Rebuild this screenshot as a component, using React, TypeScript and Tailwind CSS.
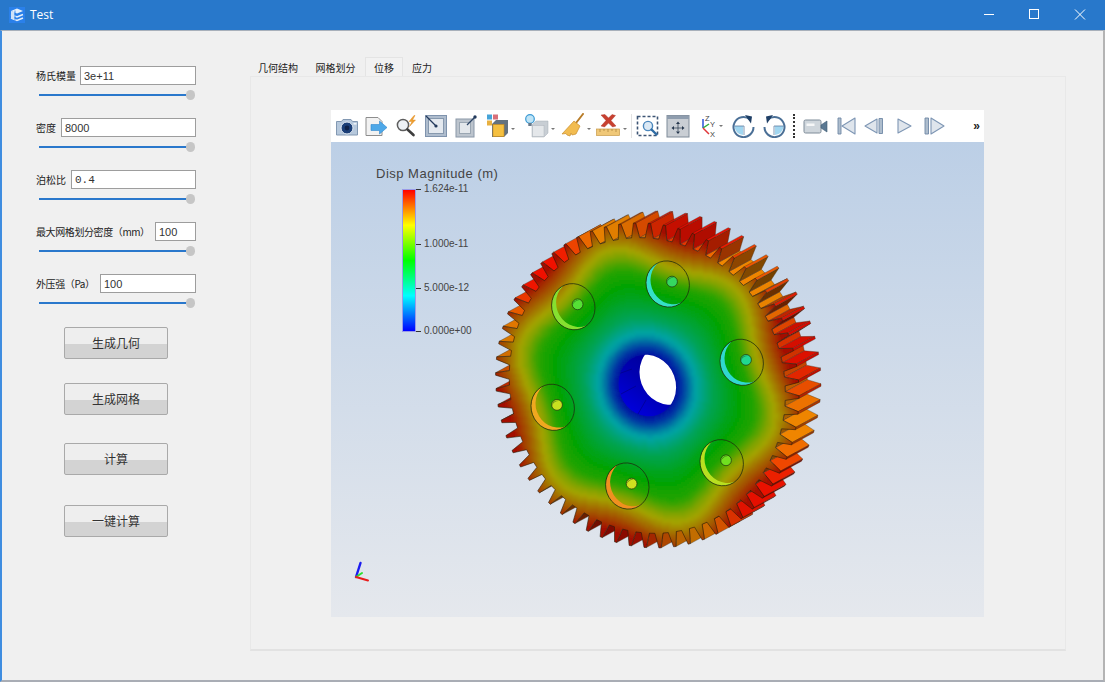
import { ReactNode, useMemo } from "react";

const CJK = "font-['Noto_Sans_CJK_SC','Noto_Sans',sans-serif]";

// gear geometry, in viewport pixels
const CX = 316.3;
const CY = 243.5;
const A = 164;
const B = 150;
const TH = (70 * Math.PI) / 180;
const DX = 22;
const DY = -12;
const TEETH = 64;

const toPage = (u: number, v: number): [number, number] => [
  CX + Math.cos(TH) * A * u - Math.sin(TH) * B * v,
  CY + Math.sin(TH) * A * u + Math.cos(TH) * B * v,
];
const toLocal = (x: number, y: number): [number, number] => {
  const dx = x - CX;
  const dy = y - CY;
  return [
    (Math.cos(TH) * dx + Math.sin(TH) * dy) / A,
    (-Math.sin(TH) * dx + Math.cos(TH) * dy) / B,
  ];
};

const bosses = [
  { x: 242.3, y: 164.7, wall: "#86e030", hole: "#55e035" },
  { x: 336.7, y: 142, wall: "#35e0c8", hole: "#35d860" },
  { x: 410.7, y: 220.3, wall: "#30d8d0", hole: "#20d890" },
  { x: 390.7, y: 320.7, wall: "#b8e020", hole: "#70e020" },
  { x: 296.3, y: 344, wall: "#f09020", hole: "#d0e020" },
  { x: 221.7, y: 265.3, wall: "#f0a820", hole: "#c8e020" },
];
const PHI0 = (() => {
  const [u, v] = toLocal(bosses[0].x, bosses[0].y);
  return Math.atan2(v, u);
})();

const stops: [number, number][] = [
  [0.17, 0],
  [0.23, 0.08],
  [0.3, 0.22],
  [0.42, 0.37],
  [0.55, 0.47],
  [0.68, 0.56],
  [0.76, 0.7],
  [0.87, 0.83],
  [1.0, 0.98],
  [1.1, 1],
];

const field = (u: number, v: number) => {
  const r = Math.hypot(u, v);
  const lobe = Math.min(1, Math.max(0, (r - 0.35) / 0.4));
  const rr = r * (1 + 0.065 * lobe * Math.cos(6 * (Math.atan2(v, u) - PHI0)));
  if (rr <= stops[0][0]) return 0;
  for (let i = 1; i < stops.length; i++) {
    if (rr <= stops[i][0]) {
      const t = (rr - stops[i - 1][0]) / (stops[i][0] - stops[i - 1][0]);
      return stops[i - 1][1] + t * (stops[i][1] - stops[i - 1][1]);
    }
  }
  return 1;
};

const rainbow = (val: number, shade: number) => {
  const s = Math.min(1, Math.max(0, val)) * 4;
  let c = [0, 0, 255];
  if (s < 1) c = [0, s * 255, 255];
  else if (s < 2) c = [0, 255, (2 - s) * 255];
  else if (s < 3) c = [(s - 2) * 255, 255, 0];
  else c = [255, (4 - s) * 255, 0];
  return `rgb(${Math.round(c[0] * shade)},${Math.round(c[1] * shade)},${Math.round(c[2] * shade)})`;
};

const gearOutline = () => {
  const pts: [number, number][] = [];
  const root = 0.91;
  for (let i = 0; i < TEETH; i++) {
    const p = (Math.PI * 2) / TEETH;
    const a = i * p;
    pts.push(toPage(root * Math.cos(a - p * 0.3), root * Math.sin(a - p * 0.3)));
    pts.push(toPage(Math.cos(a - p * 0.08), Math.sin(a - p * 0.08)));
    pts.push(toPage(Math.cos(a + p * 0.08), Math.sin(a + p * 0.08)));
    pts.push(toPage(root * Math.cos(a + p * 0.3), root * Math.sin(a + p * 0.3)));
  }
  return pts;
};

const Gear = () => {
  const { outline, walls, bins } = useMemo(() => {
    const pts = gearOutline();
    const outline = "M" + pts.map((p) => `${p[0].toFixed(1)} ${p[1].toFixed(1)}`).join("L") + "Z";
    const walls = pts
      .map((p, i) => {
        const q = pts[(i + 1) % pts.length];
        const ex = q[0] - p[0];
        const ey = q[1] - p[1];
        const len = Math.hypot(ex, ey) || 1;
        // outward normal, outline runs clockwise on screen
        const nx = ey / len;
        const ny = -ex / len;
        const mx = (p[0] + q[0]) / 2;
        const my = (p[1] + q[1]) / 2;
        const [u, v] = toLocal(mx, my);
        const shade = 0.42 + 0.52 * Math.max(0, nx * 0.6 + ny * -0.8);
        return {
          vis: nx * DX + ny * DY > 0,
          order: mx * DX + my * DY,
          fill: rainbow(Math.max(0.86, field(u, v)), shade),
          d: `M${p[0].toFixed(1)} ${p[1].toFixed(1)}L${q[0].toFixed(1)} ${q[1].toFixed(1)}L${(q[0] + DX).toFixed(1)} ${(q[1] + DY).toFixed(1)}L${(p[0] + DX).toFixed(1)} ${(p[1] + DY).toFixed(1)}Z`,
        };
      })
      .filter((w) => w.vis)
      .sort((a, b) => a.order - b.order);
    const bins: string[] = new Array(65).fill("");
    for (let x = 150; x < 490; x += 2) {
      for (let y = 60; y < 420; y += 2) {
        const [u, v] = toLocal(x + 1, y + 1);
        if (Math.hypot(u, v) > 1.06) continue;
        bins[Math.round(field(u, v) * 64)] += `M${x} ${y}h2.2v2.2h-2.2z`;
      }
    }
    return { outline, walls, bins };
  }, []);

  return (
    <g>
      <defs>
        <clipPath id="gearFace">
          <path d={outline} />
        </clipPath>
        <filter id="soft" x="-5%" y="-5%" width="110%" height="110%">
          <feGaussianBlur stdDeviation="1.6" />
        </filter>
        <clipPath id="holeFront">
          <ellipse cx={CX} cy={CY} rx={31} ry={28.5} transform={`rotate(70 ${CX} ${CY})`} />
        </clipPath>
        <linearGradient id="holeWall" x1="0" y1="0" x2="0.7" y2="1">
          <stop offset="0" stopColor="#00008c" />
          <stop offset="0.55" stopColor="#0000b0" />
          <stop offset="1" stopColor="#0000dc" />
        </linearGradient>
        {bosses.map((b, i) => (
          <mask id={`crescent${i}`} key={i} maskUnits="userSpaceOnUse" x="0" y="0" width="653" height="475">
            <ellipse cx={b.x} cy={b.y} rx={23.3} ry={21.5} fill="#fff" transform={`rotate(70 ${b.x} ${b.y})`} />
            <ellipse cx={b.x + 4.5} cy={b.y - 2.8} rx={23.3} ry={21.5} fill="#000" transform={`rotate(70 ${b.x + 4.5} ${b.y - 2.8})`} />
          </mask>
        ))}
      </defs>

      {walls.map((w, i) => (
        <path key={i} d={w.d} fill={w.fill} stroke="#3a2a10" strokeWidth={0.35} />
      ))}

      <g clipPath="url(#gearFace)">
        <g filter="url(#soft)">
          {bins.map((d, i) =>
            d ? <path key={i} d={d} fill={rainbow(i / 64, 0.64)} /> : null,
          )}
        </g>
      </g>
      <path d={outline} fill="none" stroke="#2a1c08" strokeWidth={0.6} />

      <ellipse cx={CX} cy={CY} rx={31} ry={28.5} fill="url(#holeWall)" transform={`rotate(70 ${CX} ${CY})`} />
      <g clipPath="url(#holeFront)">
        <ellipse cx={CX + 21} cy={CY - 11.5} rx={31} ry={28.5} fill="#fff" transform={`rotate(70 ${CX + 21} ${CY - 11.5})`} />
        <path d="M287 232l14 -5M290 252l15 -8M307 272l8 -14" stroke="#000070" strokeWidth={0.5} />
      </g>

      {bosses.map((b, i) => (
        <g key={i}>
          <g mask={`url(#crescent${i})`}>
            <ellipse cx={b.x} cy={b.y} rx={23.3} ry={21.5} fill={b.wall} transform={`rotate(70 ${b.x} ${b.y})`} />
          </g>
          <ellipse cx={b.x} cy={b.y} rx={23.3} ry={21.5} fill="none" stroke="#1e2a10" strokeWidth={0.7} transform={`rotate(70 ${b.x} ${b.y})`} />
          <circle cx={b.x + 4.3} cy={b.y - 2.4} r={5.4} fill={b.hole} stroke="#1e3010" strokeWidth={0.7} />
          <path d={`M${b.x - 0.7} ${b.y - 1.2}a5.4 5.4 0 0 1 7.6 -5a6.5 6.5 0 0 0 -7.6 5z`} fill="#1d5a12" opacity={0.7} />
        </g>
      ))}

      {/* orientation axes */}
      <g strokeLinecap="round">
        <path d="M25 435L29.5 421" stroke="#1c1cf0" strokeWidth={2.4} />
        <path d="M25 435L31 431" stroke="#2ce02c" strokeWidth={2} />
        <path d="M25 435L37 438.5" stroke="#e81c1c" strokeWidth={2} />
      </g>
    </g>
  );
};

const Frame = ({ children }: { children: ReactNode }) => (
  <svg width="24" height="24" viewBox="0 0 24 24" fill="none">
    {children}
  </svg>
);

const CameraIcon = () => (
  <Frame>
    <path d="M1.5 7.5h5l1.5 -2h8l1.5 2h5v13.5h-21z" fill="#b6c8dc" stroke="#8298b2" strokeLinejoin="round" />
    <circle cx="12" cy="14" r="6" fill="#1b3f78" stroke="#e2eaf3" />
    <circle cx="12" cy="14" r="2.4" fill="#0e2148" />
    <rect x="18.5" y="9" width="3" height="1.6" fill="#eef3f8" />
  </Frame>
);

const ExportIcon = () => (
  <Frame>
    <path d="M2 3.5h12l4 4v14h-16z" fill="#f2f2f2" stroke="#8d8d8d" />
    <path d="M7 10.5h8.5v-3.5l7.5 6.5l-7.5 6.5v-3.5h-8.5z" fill="#4ea8e8" stroke="#2d86cc" strokeWidth="0.6" />
  </Frame>
);

const ZoomBoltIcon = () => (
  <Frame>
    <circle cx="9" cy="11" r="5.6" fill="#eef2f6" stroke="#5d5d5d" strokeWidth="1.5" />
    <path d="M13.5 15.5l6 5.5" stroke="#3d3d3d" strokeWidth="2.6" strokeLinecap="round" />
    <path d="M20 1.5l-5 6h3l-2.5 5l6 -6.5h-3l2.5 -4.5z" fill="#f0a030" stroke="#d88418" strokeWidth="0.4" />
  </Frame>
);

const ResetIcon = () => (
  <Frame>
    <rect x="1.5" y="1.5" width="21" height="21" fill="#aebccd" stroke="#7f93ad" />
    <rect x="4.5" y="4.5" width="15" height="15" fill="#e4e9ef" stroke="#8799ae" />
    <path d="M2 2l10 10" stroke="#233a5c" strokeWidth="1.3" />
    <circle cx="12" cy="12" r="1.6" fill="#233a5c" />
  </Frame>
);

const ZoomDataIcon = () => (
  <Frame>
    <rect x="2" y="5" width="18" height="18" fill="#bcc4cd" stroke="#8a98a8" />
    <rect x="5.5" y="8.5" width="11" height="11" fill="#e3e7eb" stroke="#9aa6b2" />
    <path d="M13 11l8 -8" stroke="#2e4666" strokeWidth="1.2" />
    <circle cx="21" cy="3" r="1.7" fill="#233a5c" />
  </Frame>
);

const Caret = ({ x }: { x: number }) => <path d={`M${x} 15h4l-2 2z`} fill="#777" />;

const SolidColorIcon = () => (
  <svg width="36" height="26" viewBox="0 0 36 26" fill="none">
    <rect x="5" y="1.5" width="5" height="5" fill="#46a4d8" />
    <rect x="11" y="1.5" width="5" height="5" fill="#d8707a" />
    <rect x="5" y="7.5" width="5" height="5" fill="#e8b040" />
    <path d="M10 11l4 -4h12v13l-4 4h-12z" fill="#63727f" />
    <rect x="11" y="11.5" width="11" height="12" fill="#f5c040" stroke="#c98a18" strokeWidth="0.6" />
    <Caret x={29} />
  </svg>
);

const LightCubeIcon = () => (
  <svg width="36" height="26" viewBox="0 0 36 26" fill="none">
    <circle cx="9" cy="6" r="4.3" fill="#bfe4f6" stroke="#3b9ad4" strokeWidth="1.2" />
    <rect x="7.3" y="10" width="3.4" height="3" fill="#66788a" />
    <path d="M11 12l4 -4h12v12l-4 4h-12z" fill="#c8ced4" stroke="#a4adb6" strokeWidth="0.5" />
    <rect x="11.5" y="12.5" width="11.5" height="11" fill="#e4e7ea" stroke="#adb4bb" strokeWidth="0.5" />
    <Caret x={30} />
  </svg>
);

const BroomIcon = () => (
  <svg width="34" height="26" viewBox="0 0 34 26" fill="none">
    <path d="M24 1l-7 9" stroke="#b87c28" strokeWidth="2" strokeLinecap="round" />
    <path d="M15 8l6 5l-4 8l-4 1l-1 -2l-1 3l-3 -1l-1 -1.5l-4 0.5z" fill="#f2bc50" stroke="#c98e2c" strokeWidth="0.7" strokeLinejoin="round" />
    <Caret x={28} />
  </svg>
);

const RulerXIcon = () => (
  <svg width="34" height="26" viewBox="0 0 34 26" fill="none">
    <path d="M6 2l4 -0.5l3.5 3.5l3.5 -3.5l3.5 1l-4.5 5l5 5.5l-3.5 1l-4 -4l-4 4l-3.5 -1l5 -5.5z" fill="#c84030" stroke="#a83024" strokeWidth="0.4" />
    <rect x="1.5" y="16" width="23" height="6.5" fill="#f0c878" stroke="#c89a48" strokeWidth="0.7" />
    <path d="M5 16v3M9 16v2M13 16v3M17 16v2M21 16v3" stroke="#a87e38" strokeWidth="0.7" />
    <Caret x={28} />
  </svg>
);

const ZoomBoxIcon = () => (
  <Frame>
    <rect x="1.5" y="2.5" width="20" height="19" stroke="#3c5474" strokeWidth="1.6" strokeDasharray="3 2" />
    <circle cx="12" cy="12" r="4.6" fill="#dbe9f5" stroke="#4b87bd" strokeWidth="1.4" />
    <path d="M15.5 15.5l5 5" stroke="#2f6da6" strokeWidth="2.4" strokeLinecap="round" />
  </Frame>
);

const CenterIcon = () => (
  <Frame>
    <rect x="1" y="1.5" width="22" height="21.5" fill="#c9ced4" stroke="#7f8b99" />
    <rect x="1" y="1.5" width="22" height="3.5" fill="#8f9dae" />
    <path d="M12 7.5l-2 2.5h4zM12 20l-2 -2.5h4zM5.5 14l2.5 -2v4zM18.5 14l-2.5 -2v4z" fill="#25364c" />
    <path d="M12 10v7.5M8 14h8" stroke="#25364c" strokeWidth="0.7" />
  </Frame>
);

const AxesIcon = () => (
  <svg width="30" height="26" viewBox="0 0 30 26" fill="none">
    <path d="M7 15l0 -9" stroke="#2a50d8" strokeWidth="1.5" />
    <path d="M7 15l6 -4" stroke="#2fae3a" strokeWidth="1.5" />
    <path d="M7 15l6 6" stroke="#e0363a" strokeWidth="1.5" />
    <text x="9" y="8" fontSize="7.5" fontFamily="Liberation Sans" fill="#444">Z</text>
    <text x="14" y="14" fontSize="7.5" fontFamily="Liberation Sans" fill="#444">Y</text>
    <text x="14" y="24" fontSize="7.5" fontFamily="Liberation Sans" fill="#444">X</text>
    <path d="M23 12h4l-2 2z" fill="#777" />
  </svg>
);

const RotateIcon = ({ flip }: { flip?: boolean }) => (
  <svg width="24" height="24" viewBox="0 0 24 24" fill="none" className={flip ? "-scale-x-100" : ""}>
    <path d="M12 12h-1v9a9 9 0 0 1 -8.5 -9z" fill="#8accec" opacity="0.8" />
    <path d="M18 5.5a10 10 0 1 0 3.5 7.5" stroke="#4a6f96" strokeWidth="2" />
    <path d="M13 1l7 1.5l-1 7z" fill="#1f3f66" />
    <path d="M12 12v9M2.5 12h9.5" stroke="#4a6f96" strokeWidth="0.7" />
  </svg>
);

const RecordIcon = () => (
  <svg width="26" height="20" viewBox="0 0 26 20" fill="none">
    <rect x="1" y="4" width="17" height="13" rx="1.5" fill="#cfd6dc" stroke="#7f8c99" />
    <rect x="3.5" y="7.5" width="8" height="2.5" fill="#f6f7f8" />
    <path d="M18 9l6 -4v11l-6 -4z" fill="#5a7892" stroke="#3e5a74" strokeWidth="0.6" />
  </svg>
);

const VcrIcon = ({ d, bar }: { d: string; bar: string }) => (
  <svg width="22" height="20" viewBox="0 0 22 20" fill="none">
    <path d={d} fill="#dfe5ec" stroke="#7e96b4" strokeWidth="1.1" strokeLinejoin="round" />
    {bar ? <path d={bar} fill="#aebdcd" stroke="#6f88a6" strokeWidth="0.9" /> : null}
  </svg>
);

const Tool = ({ w, children }: { w: string; children: ReactNode }) => (
  <div className={`flex h-full items-center justify-center ${w}`}>{children}</div>
);

const Toolbar = () => (
  <div className="flex h-[32px] items-center bg-white pl-[2px]">
    <Tool w="w-[28px]"><CameraIcon /></Tool>
    <Tool w="w-[30px]"><ExportIcon /></Tool>
    <Tool w="w-[30px]"><ZoomBoltIcon /></Tool>
    <Tool w="w-[30px]"><ResetIcon /></Tool>
    <Tool w="w-[29px]"><ZoomDataIcon /></Tool>
    <Tool w="w-[40px]"><SolidColorIcon /></Tool>
    <Tool w="w-[38px]"><LightCubeIcon /></Tool>
    <Tool w="w-[36px]"><BroomIcon /></Tool>
    <Tool w="w-[36px]"><RulerXIcon /></Tool>
    <div className="mx-[1px] h-[24px] w-[1px] bg-[#e2e2e2]" />
    <Tool w="w-[30px]"><ZoomBoxIcon /></Tool>
    <Tool w="w-[30px]"><CenterIcon /></Tool>
    <Tool w="w-[36px]"><AxesIcon /></Tool>
    <Tool w="w-[30px]"><RotateIcon /></Tool>
    <Tool w="w-[30px]"><RotateIcon flip /></Tool>
    <div className="mx-[4px] h-[24px] w-[2px] border-l-2 border-dotted border-[#333]" />
    <Tool w="w-[34px]"><RecordIcon /></Tool>
    <Tool w="w-[26px]">
      <VcrIcon d="M20 2v16l-13 -8z" bar="M3 2h3v16h-3z" />
    </Tool>
    <Tool w="w-[30px]">
      <VcrIcon d="M14 3v14l-12 -7z" bar="M16 2.5h3.5v15h-3.5z" />
    </Tool>
    <Tool w="w-[30px]">
      <VcrIcon d="M5 3v14l13 -7z" bar="" />
    </Tool>
    <Tool w="w-[29px]">
      <VcrIcon d="M8 2v16l13 -8z" bar="M2 2h3.5v16h-3.5z" />
    </Tool>
    <span className="ml-auto mr-[4px] font-['Liberation_Sans',sans-serif] text-[12px] font-bold leading-none text-[#222]">»</span>
  </div>
);

const ticks = [
  { label: "1.624e-11", top: "top-[-5px]" },
  { label: "1.000e-11", top: "top-[50px]" },
  { label: "5.000e-12", top: "top-[94px]" },
  { label: "0.000e+00", top: "top-[137px]" },
];

const ScalarBar = () => (
  <div className="absolute left-[45px] top-[24px] font-['Liberation_Sans',sans-serif] text-[#444]">
    <div className="whitespace-nowrap text-[13px] leading-[16px] tracking-[0.5px]">Disp Magnitude (m)</div>
    <div className="ml-[26px] mt-[7px] flex h-[143px]">
      <div className="w-[14px] border border-[#9a9ae8] bg-[linear-gradient(to_bottom,#ff0000,#ffff00_25%,#00ff00_50%,#00ffff_75%,#0000ff)]" />
      <div className="relative w-[90px] text-[10px] leading-none">
        {ticks.map((t) => (
          <span key={t.label} className={`absolute left-0 flex items-center whitespace-nowrap ${t.top}`}>
            <i className="mr-[3px] block h-[1px] w-[5px] bg-[#333]" />
            {t.label}
          </span>
        ))}
      </div>
    </div>
  </div>
);

const params = [
  { label: "杨氏模量", value: "3e+11", w: "w-[44px]", cls: "", font: "font-['Liberation_Sans',sans-serif]" },
  { label: "密度", value: "8000", w: "w-[25px]", cls: "", font: "font-['Liberation_Sans',sans-serif]" },
  { label: "泊松比", value: "0.4", w: "w-[35px]", cls: "", font: "font-['Liberation_Mono',monospace]" },
  { label: "最大网格划分密度（mm）", value: "100", w: "w-[119px]", cls: "tracking-[-0.4px]", font: "font-['Liberation_Sans',sans-serif]" },
  { label: "外压强（Pa）", value: "100", w: "w-[64px]", cls: "tracking-[-0.4px]", font: "font-['Liberation_Sans',sans-serif]" },
];

const Param = ({ label, value, w, cls, font }: { label: string; value: string; w: string; cls: string; font: string }) => (
  <div className="mb-[33px] h-[19px]">
    <div className="flex h-[19px] items-center">
      <span className={`${w} ${cls} shrink-0 whitespace-nowrap text-[10px] text-[#222] ${CJK}`}>{label}</span>
      <input
        readOnly
        value={value}
        className={`h-[19px] min-w-0 flex-1 border border-[#9d9d9d] bg-white px-[3px] ${font} text-[11px] text-[#333] outline-none`}
      />
    </div>
    <div className="ml-[3px] mt-[5px] flex items-center">
      <div className="h-[2px] w-[148px] bg-[#2a78cc]" />
      <div className="h-[10px] w-[9px] -translate-x-[1px] rounded-full bg-[#c6c6c6]" />
    </div>
  </div>
);

const ActionButton = ({ label, mt }: { label: string; mt: string }) => (
  <button
    className={`${mt} h-[32px] w-[104px] rounded-[2px] border border-[#a9a9a9] bg-[linear-gradient(to_bottom,#eeeeee_52%,#d3d3d3_52%)] text-[12px] text-[#333] ${CJK}`}
  >
    {label}
  </button>
);

const tabs = [
  { label: "几何结构", w: "w-[56px]" },
  { label: "网格划分", w: "w-[59px]" },
  { label: "位移", w: "w-[38px]", active: true },
  { label: "应力", w: "w-[38px]" },
];

export default function App() {
  return (
    <div className="flex h-[682px] w-[1105px] flex-col overflow-hidden bg-[#f0f0f0]">
      <header className="flex h-[30px] shrink-0 items-center bg-[#2878cb] pl-[9px] text-white">
        <svg width="16" height="16" viewBox="0 0 16 16" fill="none">
          <rect width="16" height="16" fill="#2a80ea" />
          <path d="M2 4l6 -2.5l6 2.5l-6 2.5z" fill="#e6f0fb" />
          <path d="M2 7.5l6 2.5l6 -2.5M2 11l6 2.5l6 -2.5" stroke="#e6f0fb" strokeWidth="1.5" />
          <path d="M2 4v8h3.5v-7z" fill="#cfe2f8" />
          <path d="M6 3.5v10" stroke="#2a80ea" strokeWidth="0.8" />
        </svg>
        <span className="ml-[5px] font-['Open_Sans',sans-serif] text-[12px]">Test</span>
        <div className="ml-auto flex items-center">
          <svg width="46" height="30" viewBox="0 0 46 30" fill="none">
            <path d="M17 14.5h10" stroke="#fff" />
          </svg>
          <svg width="46" height="30" viewBox="0 0 46 30" fill="none">
            <rect x="16.5" y="9.5" width="9" height="9" stroke="#fff" />
          </svg>
          <svg width="46" height="30" viewBox="0 0 46 30" fill="none">
            <path d="M16 9.5l10 10M26 9.5l-10 10" stroke="#fff" />
          </svg>
        </div>
      </header>

      <div className="flex min-h-0 flex-1 border-b-2 border-l-2 border-r-2 border-t border-b-[#a9adb5] border-l-[#3f8de0] border-r-[#b4b4b4] border-t-[#a8b0ba]">
        <aside className="w-[248px] shrink-0 pt-[35px]">
          <div className="ml-[34px] w-[160px]">
            {params.map((p) => (
              <Param key={p.label} {...p} />
            ))}
          </div>
          <div className="ml-[62px] flex w-[104px] flex-col">
            <ActionButton label="生成几何" mt="mt-[1px]" />
            <ActionButton label="生成网格" mt="mt-[24px]" />
            <ActionButton label="计算" mt="mt-[28px]" />
            <ActionButton label="一键计算" mt="mt-[30px]" />
          </div>
        </aside>

        <main className="w-[816px] shrink-0 pt-[26px]">
          <div className="flex h-[19px]">
            {tabs.map((t) => (
              <div
                key={t.label}
                className={`${t.w} flex items-center justify-center pt-[1px] text-[10px] text-[#222] ${CJK} ${
                  t.active ? "border border-b-0 border-[#e4e4e4] bg-[#f2f2f2]" : ""
                }`}
              >
                {t.label}
              </div>
            ))}
          </div>
          <div className="h-[575px] border border-b-2 border-[#e8e8e8] border-b-[#e2e2e2] pl-[80px] pt-[33px]">
            <div className="w-[653px]">
              <Toolbar />
              <div className="relative h-[475px] bg-[linear-gradient(to_bottom,#bccfe6,#e5e8ed)]">
                <svg width="653" height="475" viewBox="0 0 653 475" className="absolute left-0 top-0">
                  <Gear />
                </svg>
                <ScalarBar />
              </div>
            </div>
          </div>
        </main>
      </div>
    </div>
  );
}
